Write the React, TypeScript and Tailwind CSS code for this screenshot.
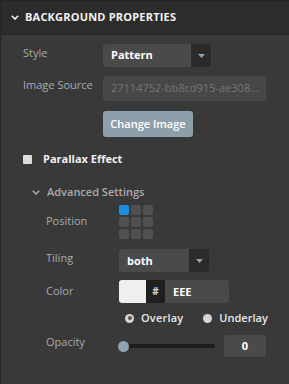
import React, { FC } from 'react'

const font = { fontFamily: '"Open Sans", "Liberation Sans", sans-serif' }

const Chevron: FC<{ color?: string }> = ({ color = '#ffffff' }) => (
  <svg width="8" height="5" viewBox="0 0 8 5" fill="none">
    <polyline points="0.8,0.8 4,4 7.2,0.8" stroke={color} strokeWidth="1.5" />
  </svg>
)

const SelectBox: FC<{ value: string; width: string }> = ({ value, width }) => (
  <div className={`flex h-[23px] ${width} rounded-[3px] overflow-hidden`}>
    <div className="flex-1 bg-[#4a4a4a] flex items-center pl-[8px] text-[11px] font-bold text-white">
      {value}
    </div>
    <div className="w-[20px] bg-[#2a2a2a] flex items-center justify-center">
      <svg width="7" height="4" viewBox="0 0 7 4">
        <polygon points="0,0 7,0 3.5,4" fill="#8fa3b3" />
      </svg>
    </div>
  </div>
)

const Label: FC<{ children: React.ReactNode; className?: string }> = ({
  children,
  className = ''
}) => <div className={`text-[11px] text-[#a9a9a9] ${className}`}>{children}</div>

export default function App() {
  return (
    <div
      className="w-[289px] h-[384px] bg-[#393939] border-l border-[#262626] overflow-hidden"
      style={font}
    >
      {/* header */}
      <div className="h-[35px] bg-[#2c2c2c] border-t border-b border-[#252525] flex items-center pl-[10px] gap-[6px]">
        <Chevron />
        <span className="text-[11px] font-bold text-[#f2f2f2] tracking-[0.2px]">
          BACKGROUND PROPERTIES
        </span>
      </div>

      <div className="pl-[22px]">
        {/* style */}
        <div className="flex items-center mt-[9px]">
          <Label className="w-[80px] -mt-[4px]">Style</Label>
          <SelectBox value="Pattern" width="w-[108px]" />
        </div>

        {/* image source */}
        <div className="flex items-center mt-[9px]">
          <Label className="w-[80px] -mt-[6px]">Image Source</Label>
          <div className="w-[163px] h-[25px] rounded-[3px] bg-[#474747] flex items-center pl-[8px] text-[11px] text-[#767676] whitespace-nowrap overflow-hidden">
            27114752-bb8cd915-ae308...
          </div>
        </div>

        {/* change image */}
        <div className="pl-[80px] mt-[9px]">
          <button className="w-[90px] h-[26px] rounded-[3px] bg-[#8e9fac] text-[11px] font-semibold text-white">
            Change Image
          </button>
        </div>

        {/* parallax */}
        <div className="flex items-center mt-[14px] gap-[11px]">
          <div className="w-[9px] h-[9px] rounded-[1px] bg-[#dcdcdc]" />
          <span className="text-[11px] font-bold text-[#f2f2f2]">Parallax Effect</span>
        </div>

        {/* advanced */}
        <div className="pl-[9px]">
          <div className="flex items-center gap-[7px] mt-[16px]">
            <Chevron color="#a9a9a9" />
            <span className="text-[11px] font-semibold text-[#a9a9a9]">Advanced Settings</span>
          </div>

          <div className="pl-[14px]">
            {/* position */}
            <div className="flex items-center mt-[5px]">
              <Label className="w-[73px] -mt-[3px]">Position</Label>
              <div className="grid grid-cols-3 gap-[2px] w-[34px]">
                {Array.from({ length: 9 }).map((_, i) => (
                  <div
                    key={i}
                    className={`w-[10px] h-[10px] rounded-[2px] ${
                      i === 0 ? 'bg-[#1a8ee0]' : 'bg-[#505050]'
                    }`}
                  />
                ))}
              </div>
            </div>

            {/* tiling */}
            <div className="flex items-center mt-[10px]">
              <Label className="w-[73px] -mt-[6px]">Tiling</Label>
              <SelectBox value="both" width="w-[90px]" />
            </div>

            {/* color */}
            <div className="flex items-center mt-[8px]">
              <Label className="w-[73px] -mt-[2px]">Color</Label>
              <div className="flex h-[23px] rounded-[3px] overflow-hidden w-[110px]">
                <div className="w-[27px] bg-[#efefef]" />
                <div className="w-[19px] bg-[#1f1f1f] flex items-center justify-center text-[10px] font-bold text-[#cfcfcf]">
                  #
                </div>
                <div className="flex-1 bg-[#4a4a4a] flex items-center pl-[8px] text-[11px] font-bold text-white">
                  EEE
                </div>
              </div>
            </div>

            {/* radios */}
            <div className="flex items-center mt-[9px] pl-[79px] h-[12px]">
              <div className="flex items-center gap-[7px]">
                <div className="w-[9px] h-[9px] rounded-full bg-[#d6d6d6] flex items-center justify-center">
                  <div className="w-[4px] h-[4px] rounded-full bg-[#555555]" />
                </div>
                <span className="text-[11px] font-semibold text-[#e8e8e8] tracking-[0.2px]">Overlay</span>
              </div>
              <div className="flex items-center gap-[7px] ml-[20px]">
                <div className="w-[9px] h-[9px] rounded-full bg-[#d6d6d6]" />
                <span className="text-[11px] font-semibold text-[#e8e8e8]">Underlay</span>
              </div>
            </div>

            {/* opacity */}
            <div className="flex items-center mt-[11px]">
              <Label className="w-[72px] -mt-[8px]">Opacity</Label>
              <div className="relative w-[97px] h-[11px] flex items-center">
                <div className="w-full h-[4px] rounded-full bg-[#1e1e1e]" />
                <div className="absolute left-0 top-0 w-[11px] h-[11px] rounded-full bg-[#8fa3b3]" />
              </div>
              <div className="ml-[9px] w-[42px] h-[22px] rounded-[3px] bg-[#4a4a4a] flex items-center justify-center text-[11px] font-bold text-white">
                0
              </div>
            </div>
          </div>
        </div>
      </div>
    </div>
  )
}
